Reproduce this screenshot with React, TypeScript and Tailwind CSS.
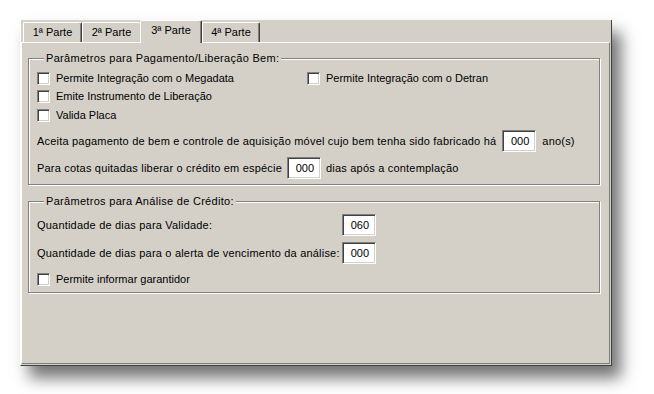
import { type ReactNode } from 'react'

// Win-classic "3ª Parte" tab page with two etched group boxes.

const tabs = ['1ª Parte', '2ª Parte', '3ª Parte', '4ª Parte']

function Check({ label }: { label: string }) {
  return (
    <label className="flex items-center gap-[6px] h-[18px]">
      <span className="w-[13px] h-[13px] bg-white border border-t-[#808080] border-l-[#808080] border-r-white border-b-white shadow-[inset_1px_1px_0_#404040,inset_-1px_-1px_0_#d4d0c8]" />
      <span>{label}</span>
    </label>
  )
}

function Field({ value }: { value: string }) {
  return (
    <div className="w-[34px] h-[22px] shrink-0 bg-white text-black border border-t-[#808080] border-l-[#808080] border-r-white border-b-white shadow-[inset_1px_1px_0_#404040,inset_-1px_-1px_0_#d4d0c8] flex items-center justify-end pr-[6px]">
      {value}
    </div>
  )
}

function Group({ title, children, className }: { title: string; children: ReactNode; className?: string }) {
  return (
    <fieldset
      className={`w-[572px] ml-[6px] border border-[#808080] shadow-[1px_1px_0_#ffffff,inset_1px_1px_0_#ffffff] px-[8px] ${className ?? ''}`}
    >
      <legend className="relative ml-[7px] px-[2px] bg-[#d4d0c8] leading-[13px] tracking-[0.3px]">{title}</legend>
      {children}
    </fieldset>
  )
}

export default function App() {
  return (
    <div className="w-[654px] h-[394px] bg-white pt-[20px] pl-[20px] text-[11px] text-black font-[family-name:'Liberation_Sans',Arial,sans-serif]">
      <div className="w-[592px] h-[346px] bg-[#d4d0c8] border-l border-l-white border-r border-b border-r-[#404040] border-b-[#404040] shadow-[9px_12px_15px_rgba(0,0,0,0.55)] flex flex-col pr-px pb-px">
        {/* tab strip */}
        <div className="flex items-end h-[22px] pl-[2px]">
          {tabs.map((t, i) => {
            const sel = i === 2
            const w = i === 0 ? 'w-[59px]' : sel ? 'w-[62px]' : 'w-[58px]'
            return (
              <div
                key={t}
                className={`${w} ${
                  sel
                    ? 'relative z-10 h-[23px] -mb-px pb-[3px] bg-[#d4d0c8] border-l border-t border-r border-l-white border-t-white border-r-[#404040] shadow-[inset_-1px_0_0_#808080]'
                    : i === 1
                      ? 'h-[20px] border-l border-t border-l-white border-t-white'
                      : 'h-[20px] border-l border-t border-r border-l-white border-t-white border-r-[#404040] shadow-[inset_-1px_0_0_#808080]'
                } rounded-t-[2px] flex items-center justify-center`}
              >
                {t}
              </div>
            )
          })}
        </div>

        {/* tab page */}
        <div className="flex-1 border border-t-white border-l-white border-r-[#808080] border-b-[#808080] pt-[9px]">
          <Group title="Parâmetros para Pagamento/Liberação Bem:" className="pb-[5px]">
            <div className="flex flex-col pt-[4px]">
              <div className="flex">
                <div className="w-[270px]">
                  <Check label="Permite Integração com o Megadata" />
                </div>
                <Check label="Permite Integração com o Detran" />
              </div>
              <div className="h-[19px] flex items-center">
                <Check label="Emite Instrumento de Liberação" />
              </div>
              <Check label="Valida Placa" />
              <div className="flex items-center gap-[6px] mt-[6px]">
                <span className="tracking-[0.2px]">
                  Aceita pagamento de bem e controle de aquisição móvel cujo bem tenha sido fabricado há
                </span>
                <Field value="000" />
                <span className="tracking-[0.2px]">ano(s)</span>
              </div>
              <div className="flex items-center gap-[5px] mt-[5px]">
                <span className="tracking-[0.2px]">Para cotas quitadas liberar o crédito em espécie</span>
                <Field value="000" />
                <span className="tracking-[0.2px]">dias após a contemplação</span>
              </div>
            </div>
          </Group>

          <Group title="Parâmetros para Análise de Crédito:" className="mt-[10px] pb-[4px]">
            <div className="flex flex-col pt-[6px]">
              <div className="flex items-center">
                <span className="w-[305px] tracking-[0.2px]">Quantidade de dias para Validade:</span>
                <Field value="060" />
              </div>
              <div className="flex items-center mt-[6px]">
                <span className="w-[305px] tracking-[0.2px]">
                  Quantidade de dias para o alerta de vencimento da análise:
                </span>
                <Field value="000" />
              </div>
              <div className="mt-[6px]">
                <Check label="Permite informar garantidor" />
              </div>
            </div>
          </Group>
        </div>
      </div>
    </div>
  )
}
